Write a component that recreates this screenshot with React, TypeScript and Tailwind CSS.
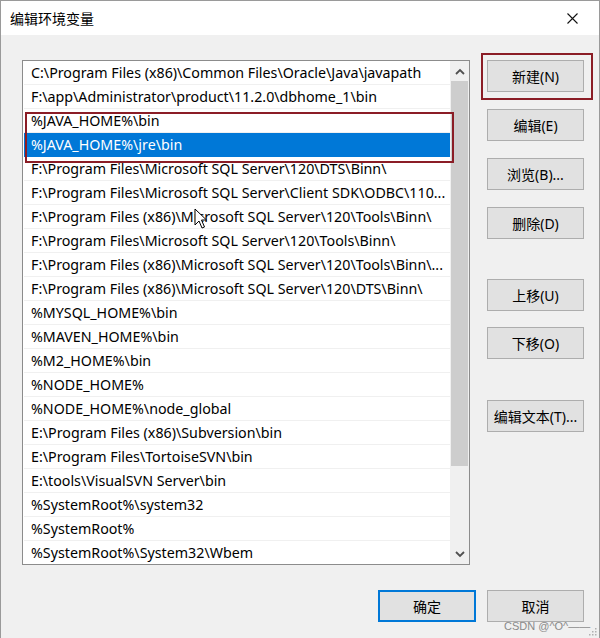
const ROWS = [
  "C:\\Program Files (x86)\\Common Files\\Oracle\\Java\\javapath",
  "F:\\app\\Administrator\\product\\11.2.0\\dbhome_1\\bin",
  "%JAVA_HOME%\\bin",
  "%JAVA_HOME%\\jre\\bin",
  "F:\\Program Files\\Microsoft SQL Server\\120\\DTS\\Binn\\",
  "F:\\Program Files\\Microsoft SQL Server\\Client SDK\\ODBC\\110...",
  "F:\\Program Files (x86)\\Microsoft SQL Server\\120\\Tools\\Binn\\",
  "F:\\Program Files\\Microsoft SQL Server\\120\\Tools\\Binn\\",
  "F:\\Program Files (x86)\\Microsoft SQL Server\\120\\Tools\\Binn\\...",
  "F:\\Program Files (x86)\\Microsoft SQL Server\\120\\DTS\\Binn\\",
  "%MYSQL_HOME%\\bin",
  "%MAVEN_HOME%\\bin",
  "%M2_HOME%\\bin",
  "%NODE_HOME%",
  "%NODE_HOME%\\node_global",
  "E:\\Program Files (x86)\\Subversion\\bin",
  "E:\\Program Files\\TortoiseSVN\\bin",
  "E:\\tools\\VisualSVN Server\\bin",
  "%SystemRoot%\\system32",
  "%SystemRoot%",
  "%SystemRoot%\\System32\\Wbem",
];

const SELECTED = 3;

function WinButton({ label, className = "" }: { label: string; className?: string }) {
  return (
    <button
      className={`w-[97px] h-[32px] bg-[#e1e1e1] border border-[#adadad] text-[14px] text-black flex items-center justify-center ${className}`}
    >
      {label}
    </button>
  );
}

function Chevron({ down = false }: { down?: boolean }) {
  return (
    <svg width="10" height="7" viewBox="0 0 10 7" className={down ? "rotate-180" : ""}>
      <path d="M1 6 L5 2 L9 6" fill="none" stroke="#505050" strokeWidth="1.8" />
    </svg>
  );
}

export default function App() {
  return (
    <div className="relative w-[600px] h-[638px] bg-[#f0f0f0] border-l border-t border-r border-[#9a9a9a] overflow-hidden font-['Noto_Sans','Noto_Sans_CJK_SC',sans-serif] select-none">
      {/* title bar */}
      <div className="h-[34px] bg-white flex items-center justify-between pl-[9px] pr-[21px]">
        <span className="text-[14px] text-black">编辑环境变量</span>
        <svg width="11" height="11" viewBox="0 0 11 11">
          <path d="M0.5 0.5 L10.5 10.5 M10.5 0.5 L0.5 10.5" stroke="#111" strokeWidth="1.1" />
        </svg>
      </div>

      <div className="flex pl-[21px] pt-[25px]">
        {/* list */}
        <div className="relative w-[448px] h-[505px] bg-white border border-[#8c8c8c] flex">
          <div className="flex-1 overflow-hidden pl-[1px]">
            {ROWS.map((row, i) => (
              <div
                key={i}
                className={`h-[24px] flex items-center pl-[7px] whitespace-nowrap text-[14.25px] border-b ${
                  i === SELECTED
                    ? "bg-[#0078d7] text-white border-[#0078d7]"
                    : "text-black border-[#f0f0f0]"
                }`}
              >
                {row}
              </div>
            ))}
          </div>
          {/* scrollbar */}
          <div className="w-[19px] bg-[#f0f0f0] flex flex-col">
            <div className="h-[20px] flex items-center justify-center">
              <Chevron />
            </div>
            <div className="h-[385px] mx-[1px] bg-[#cdcdcd]" />
            <div className="flex-1" />
            <div className="h-[20px] flex items-center justify-center">
              <Chevron down />
            </div>
          </div>

          {/* annotation box around the JAVA rows */}
          <div className="absolute left-[2px] top-[51px] w-[429px] h-[51px] border-2 border-[#8b1d26]" />

          {/* mouse pointer */}
          <svg
            className="absolute left-[171px] top-[147px]"
            width="14"
            height="22"
            viewBox="0 0 14 22"
          >
            <path
              d="M1 1 L1 17 L5 13 L8 20 L10.5 19 L7.5 12 L12.5 12 Z"
              fill="#fff"
              stroke="#000"
              strokeWidth="1"
              strokeLinejoin="round"
            />
          </svg>
        </div>

        {/* side buttons */}
        <div className="ml-[17px] flex flex-col">
          <div className="relative">
            <WinButton label="新建(N)" />
            <div className="absolute -left-[6px] -top-[7px] -right-[9px] -bottom-[8px] border-2 border-[#8b1d26]" />
          </div>
          <WinButton label="编辑(E)" className="mt-[17px]" />
          <WinButton label="浏览(B)..." className="mt-[17px]" />
          <WinButton label="删除(D)" className="mt-[17px]" />
          <WinButton label="上移(U)" className="mt-[40px]" />
          <WinButton label="下移(O)" className="mt-[16px]" />
          <WinButton label="编辑文本(T)..." className="mt-[41px]" />
        </div>
      </div>

      {/* bottom buttons */}
      <div className="flex justify-end gap-[11px] pr-[15px] mt-[25px]">
        <button className="w-[98px] h-[32px] bg-[#e1e1e1] border-2 border-[#0078d7] text-[14px] text-black flex items-center justify-center">
          确定
        </button>
        <WinButton label="取消" />
      </div>

      {/* watermark + resize grip */}
      <div className="absolute left-[503px] top-[620px] text-[11px] leading-none text-[#8a8a8a] font-['Liberation_Sans',sans-serif] whitespace-nowrap">
        CSDN @^O^——
      </div>
      <svg className="absolute right-[2px] bottom-[2px]" width="9" height="9" viewBox="0 0 9 9">
        <rect x="7" y="1" width="1.5" height="1.5" fill="#b0b0b0" />
        <rect x="4" y="4" width="1.5" height="1.5" fill="#b0b0b0" />
        <rect x="7" y="4" width="1.5" height="1.5" fill="#b0b0b0" />
        <rect x="1" y="7" width="1.5" height="1.5" fill="#b0b0b0" />
        <rect x="4" y="7" width="1.5" height="1.5" fill="#b0b0b0" />
        <rect x="7" y="7" width="1.5" height="1.5" fill="#b0b0b0" />
      </svg>
    </div>
  );
}
